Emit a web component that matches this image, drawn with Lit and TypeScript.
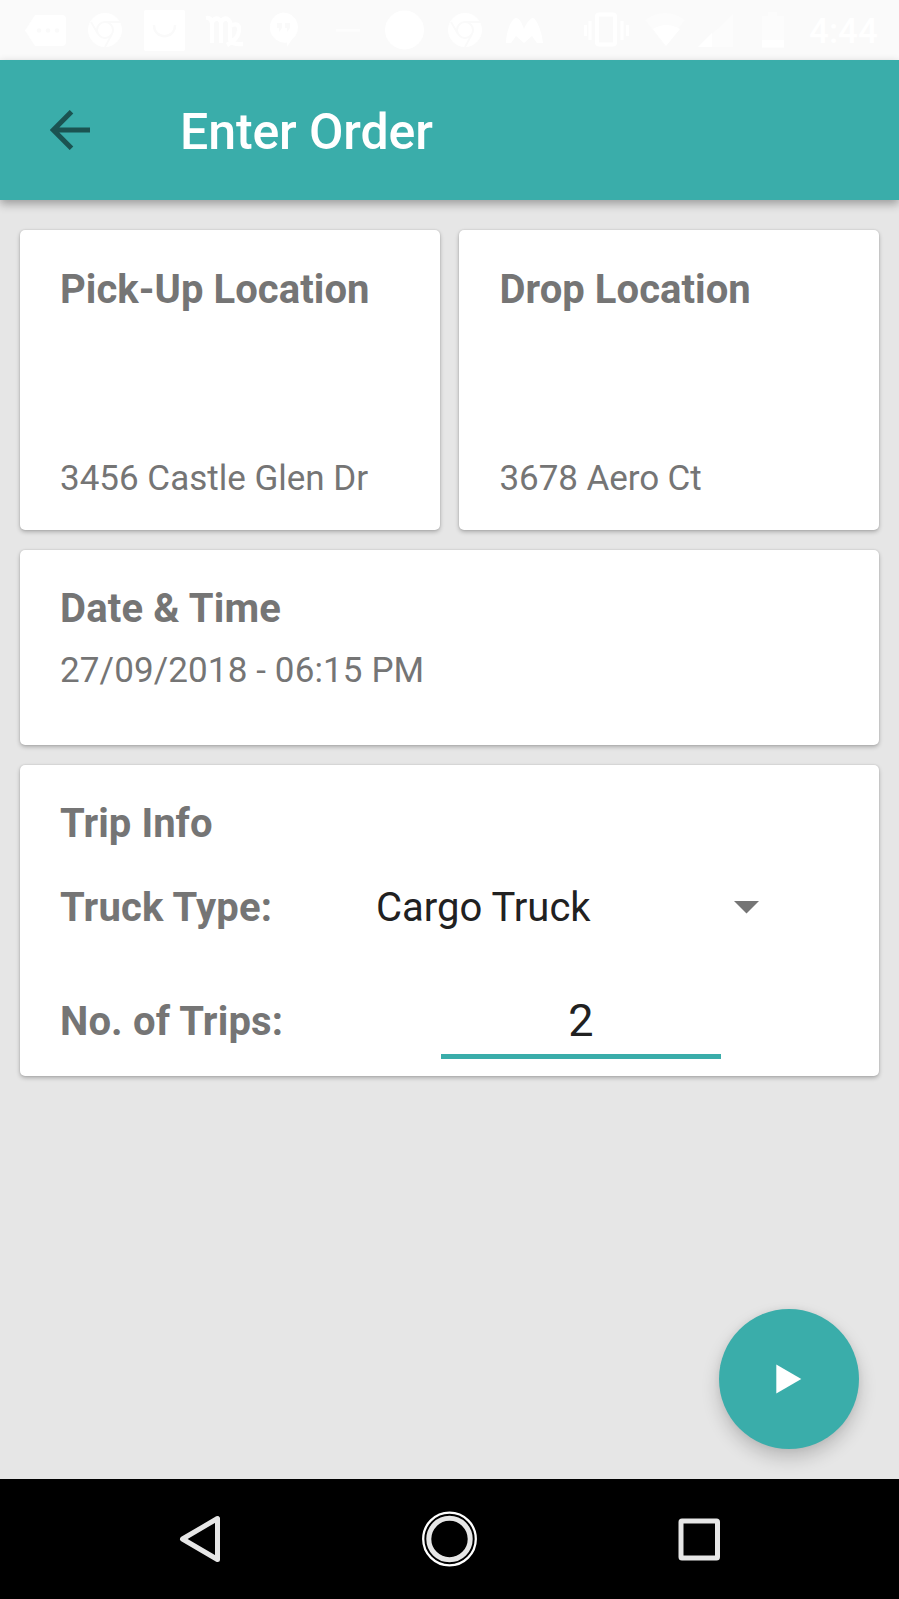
import { LitElement, html, css, svg } from "lit";
import { customElement, property, state } from "lit/decorators.js";

const chromeGlyph = svg`
  <circle r="17" fill="#fff"/>
  <circle r="8" fill="none" stroke="#fafafa" stroke-width="2"/>
  <path d="M0 -8H16M-7 4L-14 -8M7 4L0 17" stroke="#fafafa" stroke-width="1.800" fill="none"/>`;

@customElement("status-bar")
class StatusBar extends LitElement {
  static styles = css`
    :host { display: flex; height: 60px; background: #fafafa; color: #fff; }
    svg { display: block; flex: none; }
    .time {
      width: 90px;
      font-size: 35px;
      font-weight: 500;
      line-height: 64px;
      height: 60px;
      white-space: nowrap;
    }
  `;
  render() {
    return html`
      <svg width="560" height="60" viewBox="0 0 560 60" fill="#fff">
        <path d="M35 15H62a4 4 0 0 1 4 4V42a4 4 0 0 1-4 4H35L25 30.500Z"/>
        <g fill="#fafafa"><circle cx="39" cy="30.500" r="2.300"/><circle cx="48" cy="30.500" r="2.300"/><circle cx="57" cy="30.500" r="2.300"/></g>
        <g transform="translate(105 30)">${chromeGlyph}</g>
        <rect x="144" y="10" width="41" height="41" rx="2"/>
        <path d="M154 25c0 15 21 15 21 0" fill="none" stroke="#fafafa" stroke-width="2.500"/>
        <path d="M206 18q5-1 6 5V43M212 22q5-7 9 0V43M221 22q5-7 9 0V38q0 7 13 6M230 26q10-5 9 5-1 8-12 14" fill="none" stroke="#fff" stroke-width="4.300"/>
        <path d="M283 12.500a15 15 0 0 1 9 27L287 47V42.500A15 15 0 0 1 283 12.500Z"/>
        <path d="M277 23h5v5l-3 4v-4h-2zM285 23h5v5l-3 4v-4h-2z" fill="#fafafa"/>
        <rect x="336" y="29" width="24" height="2.500" fill="#fdfdfd"/>
        <circle cx="404.500" cy="30" r="19.500"/>
        <g transform="translate(465 30)">${chromeGlyph}</g>
        <path d="M506 43C506 31 512 18 516 18S522 24 524 29C526 24 530 18 533 18S542 31 543 43L537 43 532 36 524 43 516 36 511 43Z"/>
      </svg>
      <svg width="249" height="60" viewBox="560 0 249 60" fill="#fff">
        <rect x="597" y="14.500" width="18" height="30" rx="2" fill="none" stroke="#fff" stroke-width="4"/>
        <path d="M585.500 25V36M590 21V40M622 21V40M627.500 25V36" stroke="#fff" stroke-width="3"/>
        <path d="M645 20Q665 6 685 20L665 46Z" fill="#fcfcfc"/>
        <path d="M653 29Q666 21 680 29L666 46Z"/>
        <path d="M698 47L733 14V47Z" fill="#fcfcfc"/>
        <path d="M698 47L712 33V47Z"/>
        <path d="M762 16H768V12H777V16H784V47H762Z" fill="#fcfcfc"/>
        <rect x="762" y="40" width="22" height="7.500"/>
      </svg>
      <div class="time">4:44</div>
    `;
  }
}

@customElement("app-bar")
class AppBar extends LitElement {
  @property() heading = "";
  static styles = css`
    :host {
      display: flex;
      align-items: center;
      height: 140px;
      box-sizing: border-box;
      padding-left: 50px;
      background: #3aadaa;
      box-shadow: 0 4px 9px rgba(0, 0, 0, 0.32);
    }
    svg { display: block; }
    .title {
      margin-left: 90px;
      padding-top: 3px;
      font-size: 50px;
      line-height: 60px;
      font-weight: 500;
      letter-spacing: -0.1px;
      color: #fff;
      white-space: nowrap;
    }
  `;
  render() {
    return html`
      <svg width="40" height="40" viewBox="0 0 40 40">
        <path d="M40 20H4M21.500 1.700L3.300 20 21.500 38.300" fill="none" stroke="#1b5351" stroke-width="5"/>
      </svg>
      <div class="title">${this.heading}</div>
    `;
  }
}

@customElement("nav-bar")
class NavBar extends LitElement {
  static styles = css`
    :host { display: flex; justify-content: space-between; align-items: center; height: 120px; box-sizing: border-box; padding: 0 172px; background: #000; }
    svg { display: block; }
  `;
  render() {
    return html`
      <svg width="56" height="56" viewBox="0 0 56 56"><path d="M45.500 7.500V48.500L10.500 28Z" fill="none" stroke="#e6e6e6" stroke-width="5" stroke-linejoin="round"/></svg>
      <svg width="56" height="56" viewBox="0 0 56 56" fill="none"><circle cx="27.500" cy="28" r="26.300" stroke="#fff" stroke-width="2.300"/><circle cx="27.500" cy="28" r="20.700" stroke="#e6e6e6" stroke-width="5"/></svg>
      <svg width="56" height="56" viewBox="0 0 56 56"><rect x="10" y="10" width="36.500" height="37" rx="1" fill="none" stroke="#e6e6e6" stroke-width="5"/></svg>
    `;
  }
}

@customElement("app-root")
class AppRoot extends LitElement {
  @state() pickUp = "3456 Castle Glen Dr";
  @state() drop = "3678 Aero Ct";
  @state() when = "27/09/2018 - 06:15 PM";
  @state() truck = "Cargo Truck";
  @state() trips = 2;

  static styles = css`
    :host {
      display: flex;
      flex-direction: column;
      position: relative;
      width: 899px;
      height: 1599px;
      overflow: hidden;
      background: #e6e6e6;
      font-family: Roboto, sans-serif;
      color: #757575;
    }
    main {
      flex: 1;
      display: flex;
      flex-direction: column;
      gap: 20px;
      padding: 30px 20px 0;
    }
    .places { display: grid; grid-template-columns: 1fr 1fr; gap: 19px; height: 300px; }
    .card {
      box-sizing: border-box;
      padding: 35px 40px 0;
      background: #fff;
      border-radius: 5px;
      box-shadow: 0 2px 4px rgba(0, 0, 0, 0.25), 0 0 2px rgba(0, 0, 0, 0.14);
    }
    .place { display: flex; flex-direction: column; justify-content: space-between; padding-top: 36px; padding-bottom: 30px; }
    .place + .place { padding-left: 40.500px; }
    .label { font-size: 40px; line-height: 48px; font-weight: 700; letter-spacing: 0.05px; white-space: nowrap; }
    .value { font-size: 35px; line-height: 42px; white-space: nowrap; }
    .place + .place .value { letter-spacing: -0.08px; }
    .date { height: 195px; }
    .date .label, .row .label { letter-spacing: 0.16px; }
    .date .value { margin-top: 17px; letter-spacing: 0.12px; }
    .trip { height: 311px; }
    .row { display: flex; }
    .type { margin-top: 36px; }
    .count { margin-top: 66px; }
    .type .label { width: 316px; }
    .count .label { width: 381px; }
    .choice { width: 357.500px; font-size: 40px; line-height: 48px; color: #212121; }
    .caret { display: block; margin-top: 17px; }
    .field {
      width: 280px;
      height: 61px;
      box-sizing: border-box;
      border-bottom: 5px solid #3aadaa;
      text-align: center;
      font-size: 45px;
      line-height: 46px;
      color: #212121;
    }
    .fab {
      position: absolute;
      right: 40px;
      bottom: 150px;
      width: 140px;
      height: 140px;
      padding: 0;
      border: 0;
      border-radius: 50%;
      background: #3aadaa;
      box-shadow: 0 9px 18px rgba(0, 0, 0, 0.19), 0 0 7px rgba(0, 0, 0, 0.06);
    }
    .fab svg { display: block; }
  `;

  render() {
    return html`
      <status-bar></status-bar>
      <app-bar heading="Enter Order"></app-bar>
      <main>
        <section class="places">
          <div class="card place">
            <div class="label">Pick-Up Location</div>
            <div class="value">${this.pickUp}</div>
          </div>
          <div class="card place">
            <div class="label">Drop Location</div>
            <div class="value">${this.drop}</div>
          </div>
        </section>
        <section class="card date">
          <div class="label">Date &amp; Time</div>
          <div class="value">${this.when}</div>
        </section>
        <section class="card trip">
          <div class="label">Trip Info</div>
          <div class="row type">
            <div class="label">Truck Type:</div>
            <div class="choice">${this.truck}</div>
            <svg class="caret" width="26" height="13" viewBox="0 0 26 13"><path d="M0 0H25L12.500 12.500Z" fill="#757575"/></svg>
          </div>
          <div class="row count">
            <div class="label">No. of Trips:</div>
            <div class="field">${this.trips}</div>
          </div>
        </section>
      </main>
      <nav-bar></nav-bar>
      <button class="fab" aria-label="Continue">
        <svg width="140" height="140" viewBox="0 0 140 140"><path d="M57.300 55.500V84.500L82.300 70Z" fill="#fff"/></svg>
      </button>
    `;
  }
}
